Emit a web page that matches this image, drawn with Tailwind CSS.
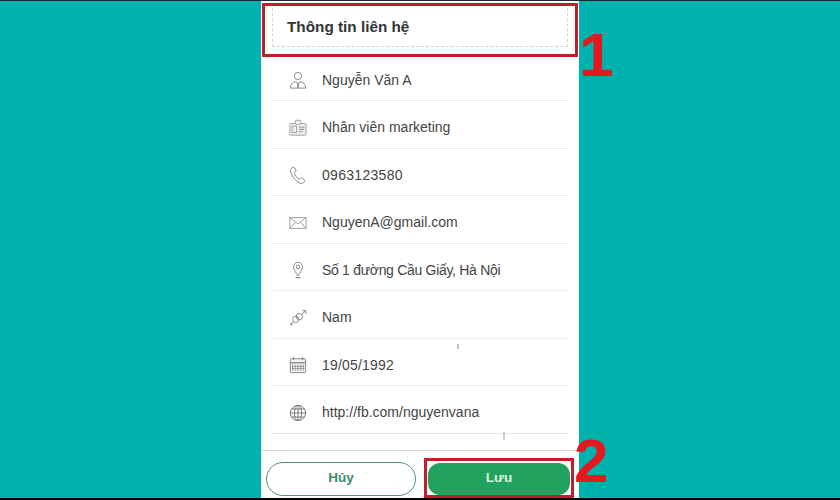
<!DOCTYPE html>
<html lang="vi">
<head>
  <meta charset="UTF-8">
  <title>Thông tin liên hệ</title>
  <script src="https://cdn.jsdelivr.net/npm/@tailwindcss/browser@4"></script>
</head>
<body class="w-[840px] h-[500px] overflow-hidden bg-[#00b2ae] font-['Liberation_Sans',sans-serif]">
  <div class="relative w-[840px] h-[500px] flex justify-center">
    <!-- phone panel -->
    <div class="w-[318px] h-[498px] bg-white flex flex-col">
      <div class="h-[52.5px] mt-[1px] px-[11px] pt-[7px]">
        <div class="h-[39px] border border-dashed border-[#d4d4d4] border-t-0 pl-[14px] pt-[7px] text-[15.300px] leading-[24px] font-bold text-[#333]">Thông tin liên hệ</div>
      </div>
      <div class="flex-1 px-[11px] text-[14px] text-[#444]">
        <!-- ten -->
        <div class="h-[47.5px] flex items-center pt-[7px] border-b border-[#ececec]">
          <div class="w-[50px] flex pl-[17px]">
            <svg class="w-[18px] h-[18px]" viewBox="0 0 20 20" fill="none" stroke="#8a8a8a" stroke-width="1.100"><circle cx="10" cy="5.500" r="4"/><path d="M1.500 19c0-4.500 3-6.500 6-7l2.500 2 2.500-2c3 .5 6 2.500 6 7z"/><path d="M10 14v5" stroke-width="2"/></svg>
          </div>
          <span>Nguyễn Văn A</span>
        </div>
        <!-- chuc vu -->
        <div class="h-[47.5px] flex items-center pt-[7px] border-b border-[#ececec]">
          <div class="w-[50px] flex pl-[17px]">
            <svg class="w-[18px] h-[18px]" viewBox="0 0 20 20" fill="#f1f1f1" stroke="#a0a0a0" stroke-width="1.100"><rect x="1" y="5" width="18" height="13" rx="1.500"/><rect x="7" y="1.500" width="6" height="4.500" rx="1"/><rect x="3.500" y="8" width="5" height="7"/><path d="M11 9h6M11 11.500h6M11 14h4" stroke-width="1.500"/></svg>
          </div>
          <span>Nhân viên marketing</span>
        </div>
        <!-- sdt -->
        <div class="h-[47.5px] flex items-center pt-[7px] border-b border-[#ececec]">
          <div class="w-[50px] flex pl-[17px]">
            <svg class="w-[18px] h-[18px]" viewBox="0 0 20 20" fill="none" stroke="#8a8a8a" stroke-width="1.100"><path d="M4.500 1.500 2 3c-1 1 -.5 3 .5 5.500 1.500 3.500 4 7 7.500 9.500 2.500 1.500 4.500 1.800 5.500 1l2-2c.4-.5.300-1 0-1.300l-3-2.400c-.5-.4-1-.3-1.400 0l-1.300 1.200c-.5.3-1 .3-1.500-.1-1.500-1.300-3.500-4-4.300-6-.2-.6-.1-1 .3-1.300l1.200-.9c.4-.4.500-.9.300-1.400L6 1.800c-.3-.6-1-.7-1.500-.3z"/></svg>
          </div>
          <span class="tracking-[.3px]">0963123580</span>
        </div>
        <!-- email -->
        <div class="h-[47.5px] flex items-center pt-[7px] border-b border-[#ececec]">
          <div class="w-[50px] flex pl-[17px]">
            <svg class="w-[18px] h-[18px]" viewBox="0 0 20 20" fill="none" stroke="#a0a0a0" stroke-width="1.100"><rect x="1" y="4" width="18" height="12"/><path d="m1 4 9 7 9-7M1 16l6.500-7M19 16l-6.500-7"/></svg>
          </div>
          <span>NguyenA@gmail.com</span>
        </div>
        <!-- dia chi -->
        <div class="h-[47.5px] flex items-center pt-[7px] border-b border-[#ececec]">
          <div class="w-[50px] flex pl-[17px]">
            <svg class="w-[18px] h-[18px]" viewBox="0 0 20 20" fill="none" stroke="#8a8a8a" stroke-width="1.100"><path d="M10 16.500c-2-3.500-5-6.500-5-10a5 5 0 0 1 10 0c0 3.500-3 6.500-5 10z"/><circle cx="10" cy="6.500" r="2"/><path d="M7.500 18.500h5" stroke-width="1.500"/></svg>
          </div>
          <span class="tracking-[-.3px]">Số 1 đường Cầu Giấy, Hà Nội</span>
        </div>
        <!-- gioi tinh -->
        <div class="h-[47.5px] flex items-center pt-[7px] border-b border-[#ececec]">
          <div class="w-[50px] flex pl-[17px]">
            <svg class="w-[18px] h-[18px]" viewBox="0 0 20 20" fill="none" stroke="#8a8a8a" stroke-width="1.100"><circle cx="7.500" cy="11.500" r="3.500"/><circle cx="11.500" cy="8.500" r="3.500"/><path d="m14 6 4.500-4M15 1.800h3.700v3.400M4.800 14 1.500 18M1 15.500l3 2.500"/></svg>
          </div>
          <span>Nam</span>
        </div>
        <!-- ngay sinh -->
        <div class="h-[47.5px] flex items-center pt-[7px] border-b border-[#ececec]">
          <div class="w-[50px] flex pl-[17px]">
            <svg class="w-[18px] h-[18px]" viewBox="0 0 20 20" fill="#f1f1f1" stroke="#8a8a8a" stroke-width="1.100"><rect x="1.500" y="3" width="17" height="15.500" rx="1"/><path d="M1.500 7.500h17" stroke-width="1.500"/><path d="M5 1.500v3M15 1.500v3" stroke-width="1.500"/><path d="M4 9.500v7M7 9.500v7M10 9.500v7M13 9.500v7M16 9.500v7M3 11.500h14M3 14h14" stroke-width=".8"/></svg>
          </div>
          <span class="tracking-[.2px]">19/05/1992</span>
        </div>
        <!-- website -->
        <div class="h-[47.5px] flex items-center pt-[7px] border-b border-[#e6e6e6]">
          <div class="w-[50px] flex pl-[17px]">
            <svg class="w-[18px] h-[18px]" viewBox="0 0 20 20" fill="none" stroke="#777" stroke-width="1.100"><circle cx="10" cy="10" r="8.500"/><ellipse cx="10" cy="10" rx="4" ry="8.500"/><path d="M10 1.500v17M1.500 10h17M3 5.500h14M3 14.500h14"/></svg>
          </div>
          <span>http://fb.com/nguyenvana</span>
        </div>
      </div>
      <!-- nut -->
      <div class="h-[48.500px] border-t border-[#d6d6d6] flex gap-[12px] pl-[5px] pt-[11px]">
        <button class="w-[150px] h-[34px] rounded-full border border-[#4f8f78] bg-white text-[13.500px] font-bold text-[#3c8a6c]">Hủy</button>
        <button class="w-[142px] h-[32px] mt-[1px] rounded-[12px] bg-[#21a35f] text-[13.500px] font-bold text-[#d8f3e2]">Lưu</button>
      </div>
    </div>
    <!-- vet mo tren anh -->
    <div class="absolute left-[457px] top-[344px] w-[2px] h-[5px] bg-[#c4c4c4]"></div>
    <div class="absolute left-[503px] top-[432px] w-[2px] h-[8px] bg-[#d0d0d0]"></div>
    <!-- annotation -->
    <div class="absolute left-[262px] top-[3px] w-[316px] h-[54px] border-[3px] border-[#c01f27]"></div>
    <div class="absolute left-[424px] top-[458px] w-[150px] h-[40px] border-[3px] border-[#c01f27]"></div>
    <div class="absolute left-[579px] top-[20px] text-[62px] leading-[70px] font-bold text-[#e5171f]">1</div>
    <div class="absolute left-[574px] top-[426px] text-[62px] leading-[70px] font-bold text-[#e5171f]">2</div>
    <!-- vien den tren va duoi -->
    <div class="absolute left-0 top-0 w-full h-[1px] bg-[#10302f]"></div>
    <div class="absolute left-0 bottom-0 w-full h-[2px] bg-black"></div>
  </div>
</body>
</html>
